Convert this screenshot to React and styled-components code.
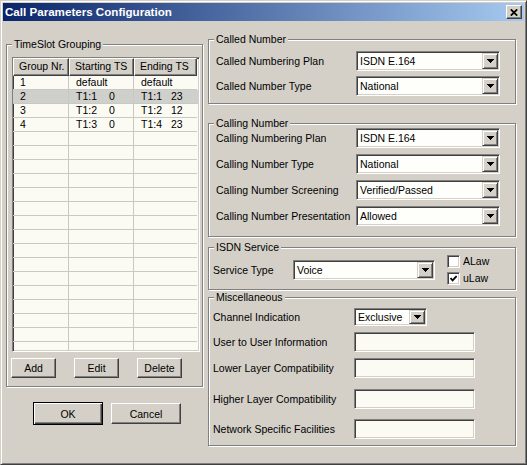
import React from "react";
import styled, { createGlobalStyle } from "styled-components";

const GlobalStyle = createGlobalStyle`
  html, body { margin: 0; padding: 0; background: #d4d0c8; }
  body { font-family: "Liberation Sans", Arial, sans-serif; }
  * { box-sizing: border-box; }
`;

const groups = [
  { nr: "1", start: "default", end: "default" },
  { nr: "2", start: ["T1:1", "0"], end: ["T1:1", "23"], selected: true },
  { nr: "3", start: ["T1:2", "0"], end: ["T1:2", "12"] },
  { nr: "4", start: ["T1:3", "0"], end: ["T1:4", "23"] },
];
const rows = [...groups, ...Array.from({ length: 16 }, () => ({ nr: "", start: "", end: "" }))];

const DropArrow = () => (
  <svg width="7" height="4" viewBox="0 0 7 4" shapeRendering="crispEdges">
    <polygon points="0,0 7,0 3.5,4" fill="#000" />
  </svg>
);

const Combo = ({ value, w, h }) => (
  <ComboBox $w={w} $h={h}>
    <ComboText>{value}</ComboText>
    <DropButton>
      <DropArrow />
    </DropButton>
  </ComboBox>
);

const Check = ({ label, checked }) => (
  <CheckRow>
    <CheckBox>
      {checked && (
        <svg width="7" height="7" viewBox="0 0 7 7">
          <path d="M0.5 3 L2.6 5.3 L6.6 1" stroke="#000" strokeWidth="1.8" fill="none" />
        </svg>
      )}
    </CheckBox>
    {label}
  </CheckRow>
);

const TsCell = ({ value, slotW }) =>
  Array.isArray(value) ? (
    <>
      <Slot $w={slotW}>{value[0]}</Slot>
      {value[1]}
    </>
  ) : (
    value
  );

const App = () => {
  return (
    <Window>
      <GlobalStyle />
      <TitleBar>
        <Title>Call Parameters Configuration</Title>
        <CloseButton>
          <svg width="8" height="7" viewBox="0 0 8 7">
            <path d="M0.8 0.3 L7.2 6.7 M7.2 0.3 L0.8 6.7" stroke="#000" strokeWidth="1.7" />
          </svg>
        </CloseButton>
      </TitleBar>

      <Body>
        <LeftColumn>
          <Group $w={197} $h={343} $mt={23} $pad="12px 0 0 0">
            <Legend>TimeSlot Grouping</Legend>
            <Table>
              <HeadRow>
                <HeadCell>Group Nr.</HeadCell>
                <HeadCell>Starting TS</HeadCell>
                <HeadCell>Ending TS</HeadCell>
              </HeadRow>
              {rows.map((r, i) => (
                <DataRow key={i} $selected={r.selected}>
                  <Cell>{r.nr}</Cell>
                  <Cell>
                    <TsCell value={r.start} slotW={33} />
                  </Cell>
                  <Cell $last>
                    <TsCell value={r.end} slotW={30} />
                  </Cell>
                </DataRow>
              ))}
            </Table>
            <TableButtons>
              <Button $w={45} $h={20}>Add</Button>
              <Button $w={45} $h={20}>Edit</Button>
              <Button $w={45} $h={20}>Delete</Button>
            </TableButtons>
          </Group>
          <DialogButtons>
            <Button $w={70} $h={23} $default>OK</Button>
            <Button $w={70} $h={21}>Cancel</Button>
          </DialogButtons>
        </LeftColumn>

        <RightColumn>
          <Group $w={308} $h={65} $mt={18} $pad="11px 0 0 7px">
            <Legend>Called Number</Legend>
            <FieldGrid $gap={5}>
              <Label>Called Numbering Plan</Label>
              <Combo value="ISDN E.164" w={144} />
              <Label>Called Number Type</Label>
              <Combo value="National" w={144} />
            </FieldGrid>
          </Group>

          <Group $w={308} $h={114} $mt={19} $pad="4px 0 0 7px">
            <Legend>Calling Number</Legend>
            <FieldGrid $gap={6}>
              <Label>Calling Numbering Plan</Label>
              <Combo value="ISDN E.164" w={144} />
              <Label>Calling Number Type</Label>
              <Combo value="National" w={144} />
              <Label>Calling Number Screening</Label>
              <Combo value="Verified/Passed" w={144} />
              <Label>Calling Number Presentation</Label>
              <Combo value="Allowed" w={144} />
            </FieldGrid>
          </Group>

          <Group $w={308} $h={43} $mt={10} $pad="7px 0 0 4px">
            <Legend>ISDN Service</Legend>
            <ServiceRow>
              <Label $w={80}>Service Type</Label>
              <Combo value="Voice" w={142} />
              <CheckColumn>
                <Check label="ALaw" />
                <Check label="uLaw" checked />
              </CheckColumn>
            </ServiceRow>
          </Group>

          <Group $w={308} $h={149} $mt={7} $pad="10px 0 0 4px">
            <Legend>Miscellaneous</Legend>
            <FieldRow $mt={0}>
              <Label $w={141}>Channel Indication</Label>
              <Combo value="Exclusive" w={73} h={18} />
            </FieldRow>
            <FieldRow $mt={6}>
              <Label $w={141}>User to User Information</Label>
              <TextInput />
            </FieldRow>
            <FieldRow $mt={6}>
              <Label $w={141}>Lower Layer Compatibility</Label>
              <TextInput />
            </FieldRow>
            <FieldRow $mt={11}>
              <Label $w={141}>Higher Layer Compatibility</Label>
              <TextInput />
            </FieldRow>
            <FieldRow $mt={10}>
              <Label $w={141}>Network Specific Facilities</Label>
              <TextInput />
            </FieldRow>
          </Group>
        </RightColumn>
      </Body>
    </Window>
  );
};

export default App;

const Window = styled.div`
  width: 527px;
  height: 465px;
  display: flex;
  flex-direction: column;
  padding: 2px;
  background: #d4d0c8;
  border: 1px solid;
  border-color: #d4d0c8 #404040 #404040 #d4d0c8;
  box-shadow: inset 1px 1px #fff, inset -1px -1px #808080;
  font-family: "Liberation Sans", Arial, sans-serif;
  font-size: 10.5px;
  color: #000;
`;

const TitleBar = styled.div`
  flex: none;
  height: 18px;
  display: flex;
  align-items: center;
  justify-content: space-between;
  padding: 0 2px;
  background: linear-gradient(to right, #0a246a, #a6caf0);
`;

const Title = styled.span`
  color: #fff;
  font-weight: bold;
  font-size: 11.6px;
  line-height: 14px;
`;

const raised = `
  background: #d4d0c8;
  border: 1px solid;
  border-color: #fff #404040 #404040 #fff;
  box-shadow: inset -1px -1px #808080;
`;

const sunken = `
  border: 1px solid;
  border-color: #808080 #fff #fff #808080;
  box-shadow: inset 1px 1px #404040, inset -1px -1px #d4d0c8;
`;

const CloseButton = styled.button`
  width: 16px;
  height: 14px;
  margin: 0;
  padding: 0;
  display: flex;
  align-items: center;
  justify-content: center;
  ${raised}
`;

const Body = styled.div`
  flex: 1;
  display: flex;
  align-items: flex-start;
  padding-left: 3px;
`;

const LeftColumn = styled.div`
  display: flex;
  flex-direction: column;
`;

const RightColumn = styled.div`
  display: flex;
  flex-direction: column;
  margin-left: 5px;
`;

const Group = styled.div`
  position: relative;
  width: ${(p) => p.$w}px;
  height: ${(p) => p.$h}px;
  margin-top: ${(p) => p.$mt}px;
  padding: ${(p) => p.$pad};
  border: 1px solid #808080;
  box-shadow: 1px 1px 0 #fff, inset 1px 1px 0 #fff;
`;

const Legend = styled.span`
  position: absolute;
  top: -7px;
  left: 5px;
  padding: 0 2px;
  line-height: 13px;
  background: #d4d0c8;
  white-space: nowrap;
`;

const Table = styled.div`
  width: 188px;
  height: 295px;
  margin-left: 5px;
  overflow: hidden;
  background: #fbfbf4;
  ${sunken}
`;

const HeadRow = styled.div`
  display: grid;
  grid-template-columns: 56px 65px 63px;
  height: 18px;
`;

const HeadCell = styled.div`
  padding-left: 5px;
  line-height: 15px;
  white-space: nowrap;
  ${raised}
`;

const DataRow = styled.div`
  display: grid;
  grid-template-columns: 56px 65px 63px;
  height: 14px;
  background: ${(p) => (p.$selected ? "#cfcfcb" : "transparent")};
`;

const Cell = styled.div`
  padding-left: 7px;
  line-height: 13px;
  white-space: nowrap;
  border-bottom: 1px solid #c9c9c4;
  border-right: ${(p) => (p.$last ? "none" : "1px solid #c9c9c4")};
`;

const Slot = styled.span`
  display: inline-block;
  width: ${(p) => p.$w}px;
`;

const TableButtons = styled.div`
  display: flex;
  gap: 18px;
  margin-top: 6px;
  padding-left: 4px;
`;

const Button = styled.button`
  width: ${(p) => p.$w}px;
  height: ${(p) => p.$h}px;
  margin: 0;
  padding: 0;
  font-family: "Liberation Sans", Arial, sans-serif;
  font-size: 10.5px;
  color: #000;
  background: #d4d0c8;
  border: 1px solid;
  border-color: ${(p) => (p.$default ? "#000" : "#fff #404040 #404040 #fff")};
  box-shadow: ${(p) =>
    p.$default
      ? "inset 1px 1px #fff, inset -1px -1px #404040, inset -2px -2px #808080"
      : "inset -1px -1px #808080"};
`;

const DialogButtons = styled.div`
  display: flex;
  align-items: center;
  gap: 8px;
  margin-top: 15px;
  margin-left: 27px;
`;

const FieldGrid = styled.div`
  display: grid;
  grid-template-columns: 140px 144px;
  row-gap: ${(p) => p.$gap}px;
  align-items: center;
`;

const Label = styled.span`
  width: ${(p) => (p.$w ? `${p.$w}px` : "auto")};
  flex: none;
  line-height: 13px;
  white-space: nowrap;
`;

const ComboBox = styled.div`
  width: ${(p) => p.$w}px;
  height: ${(p) => p.$h || 20}px;
  display: flex;
  align-items: center;
  padding: 1px;
  background: #fefefb;
  ${sunken}
`;

const ComboText = styled.span`
  flex: 1;
  padding-left: 2px;
  white-space: nowrap;
`;

const DropButton = styled.span`
  width: 16px;
  height: 100%;
  display: flex;
  align-items: center;
  justify-content: center;
  background: #d4d0c8;
  border: 1px solid;
  border-color: #d4d0c8 #404040 #404040 #d4d0c8;
  box-shadow: inset 1px 1px #fff, inset -1px -1px #808080;
`;

const ServiceRow = styled.div`
  display: flex;
  align-items: center;
`;

const CheckColumn = styled.div`
  display: flex;
  flex-direction: column;
  gap: 4px;
  margin-left: 12px;
`;

const CheckRow = styled.div`
  display: flex;
  align-items: center;
  gap: 3px;
  height: 13px;
  line-height: 13px;
`;

const CheckBox = styled.span`
  width: 13px;
  height: 13px;
  display: flex;
  align-items: center;
  justify-content: center;
  background: #fff;
  ${sunken}
`;

const FieldRow = styled.div`
  display: flex;
  align-items: center;
  margin-top: ${(p) => p.$mt}px;
`;

const TextInput = styled.div`
  width: 121px;
  height: 20px;
  background: #fbfbf4;
  ${sunken}
`;
